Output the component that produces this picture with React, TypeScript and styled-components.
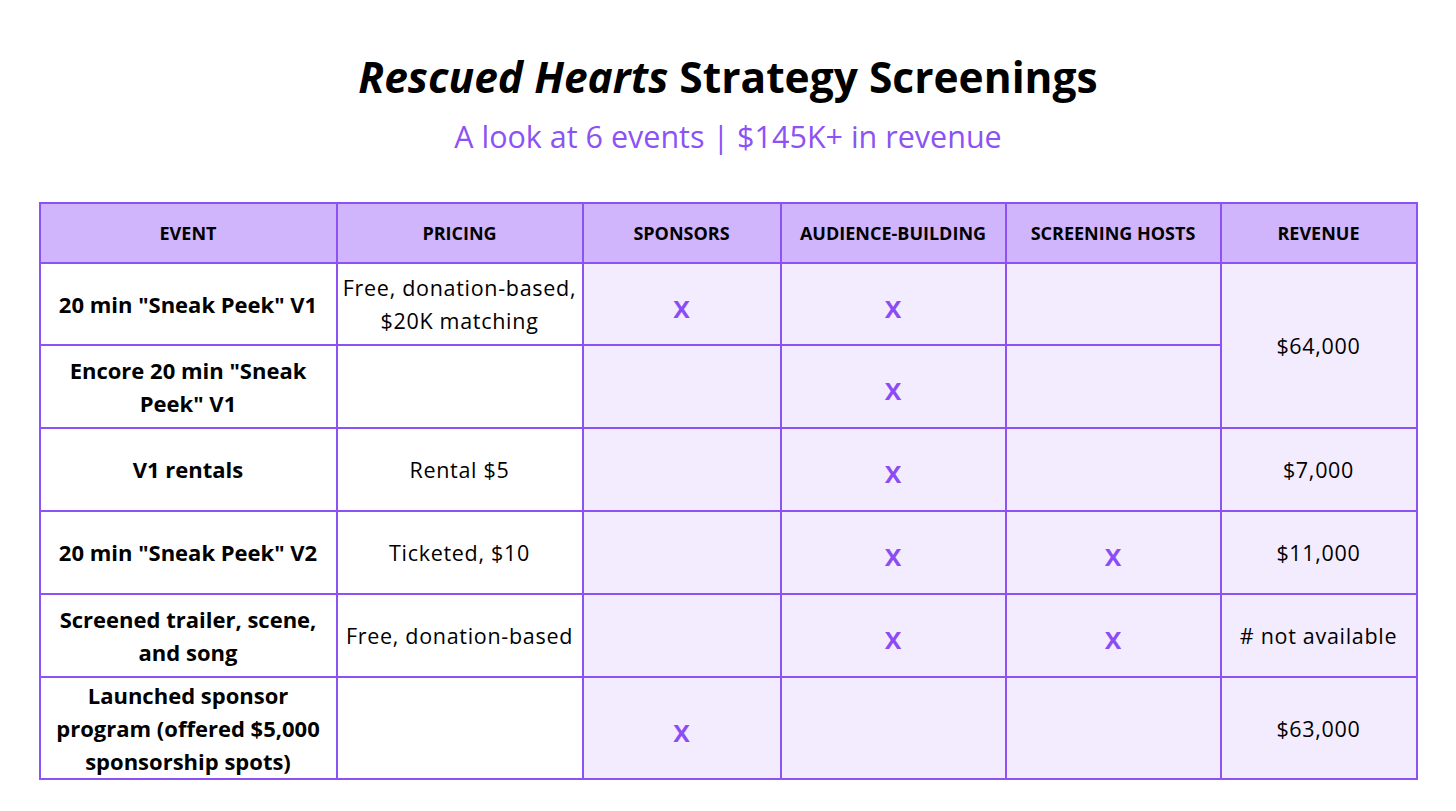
import styled, { createGlobalStyle } from "styled-components";

const GlobalStyle = createGlobalStyle`
	body {
		margin: 0;
		background: #ffffff;
		font-family: "Open Sans", "Lato", sans-serif;
		color: #000000;
	}
`;

const purple = "#8c52f5";

type Row = {
	event: string;
	pricing: string;
	sponsors?: boolean;
	audience?: boolean;
	hosts?: boolean;
	revenue?: string;
	revenueSpan?: number;
	height: number;
};

const rows: Row[] = [
	{
		event: '20 min "Sneak Peek" V1',
		pricing: "Free, donation-based, $20K matching",
		sponsors: true,
		audience: true,
		revenue: "$64,000",
		revenueSpan: 2,
		height: 82,
	},
	{
		event: 'Encore 20 min "Sneak Peek" V1',
		pricing: "",
		audience: true,
		height: 83,
	},
	{ event: "V1 rentals", pricing: "Rental $5", audience: true, revenue: "$7,000", height: 83 },
	{
		event: '20 min "Sneak Peek" V2',
		pricing: "Ticketed, $10",
		audience: true,
		hosts: true,
		revenue: "$11,000",
		height: 83,
	},
	{
		event: "Screened trailer, scene, and song",
		pricing: "Free, donation-based",
		audience: true,
		hosts: true,
		revenue: "# not available",
		height: 83,
	},
	{
		event: "Launched sponsor program (offered $5,000 sponsorship spots)",
		pricing: "",
		sponsors: true,
		revenue: "$63,000",
		height: 102,
	},
];

export default function App() {
	return (
		<>
			<GlobalStyle />
			<Page>
				<Title>
					<em>Rescued Hearts</em> Strategy Screenings
				</Title>
				<Subtitle>A look at 6 events | $145K+ in revenue</Subtitle>

				<Table>
					<colgroup>
						<col style={{ width: 297 }} />
						<col style={{ width: 246 }} />
						<col style={{ width: 198 }} />
						<col style={{ width: 225 }} />
						<col style={{ width: 215 }} />
						<col style={{ width: 196 }} />
					</colgroup>
					<thead>
						<tr>
							<Head>Event</Head>
							<Head>Pricing</Head>
							<Head>Sponsors</Head>
							<Head>Audience-building</Head>
							<Head>Screening hosts</Head>
							<Head>Revenue</Head>
						</tr>
					</thead>
					<tbody>
						{rows.map((row, i) => (
							<tr key={i} style={{ height: row.height }}>
								<EventCell>{row.event}</EventCell>
								<Cell $tint={false}>{row.pricing}</Cell>
								<Cell $tint>{row.sponsors && <Mark>x</Mark>}</Cell>
								<Cell $tint>{row.audience && <Mark>x</Mark>}</Cell>
								<Cell $tint>{row.hosts && <Mark>x</Mark>}</Cell>
								{row.revenue !== undefined && (
									<Cell $tint rowSpan={row.revenueSpan}>
										{row.revenue}
									</Cell>
								)}
							</tr>
						))}
					</tbody>
				</Table>
			</Page>
		</>
	);
}

const Page = styled.main`
	display: flex;
	flex-direction: column;
	align-items: center;
	padding-top: 50px;
`;

const Title = styled.h1`
	margin: 0;
	font-family: "Open Sans", sans-serif;
	font-weight: 700;
	font-size: 42.5px;
	line-height: 54px;
	letter-spacing: 0;

	em {
		font-style: italic;
	}
`;

const Subtitle = styled.p`
	margin: 12px 0 0;
	font-family: "Open Sans", sans-serif;
	font-weight: 400;
	font-size: 30.5px;
	line-height: 40px;
	color: #8c52f5;
`;

const Table = styled.table`
	margin-top: 46px;
	width: 1377px;
	table-layout: fixed;
	border-collapse: collapse;
	border: 2px solid ${purple};
`;

const Head = styled.th`
	height: 58px;
	padding: 0 4px;
	background: #d0b5fc;
	border: 2px solid ${purple};
	font-size: 18px;
	font-weight: 700;
	text-transform: uppercase;
	text-align: center;
	vertical-align: middle;
`;

const Cell = styled.td<{ $tint: boolean }>`
	padding: 0 4px;
	background: ${(p) => (p.$tint ? "#f3ecfe" : "#ffffff")};
	border: 2px solid ${purple};
	font-size: 21.5px;
	line-height: 33px;
	letter-spacing: 0.7px;
	text-align: center;
	vertical-align: middle;
`;

const EventCell = styled(Cell).attrs({ $tint: false })`
	font-weight: 700;
	font-size: 22px;
	letter-spacing: 0;
	padding: 0 8px;
`;

const Mark = styled.span`
	display: inline-block;
	margin-top: 8px;
	color: #8c4cf5;
	font-size: 31px;
	line-height: 30px;
	font-weight: 600;
	letter-spacing: 0;
`;
